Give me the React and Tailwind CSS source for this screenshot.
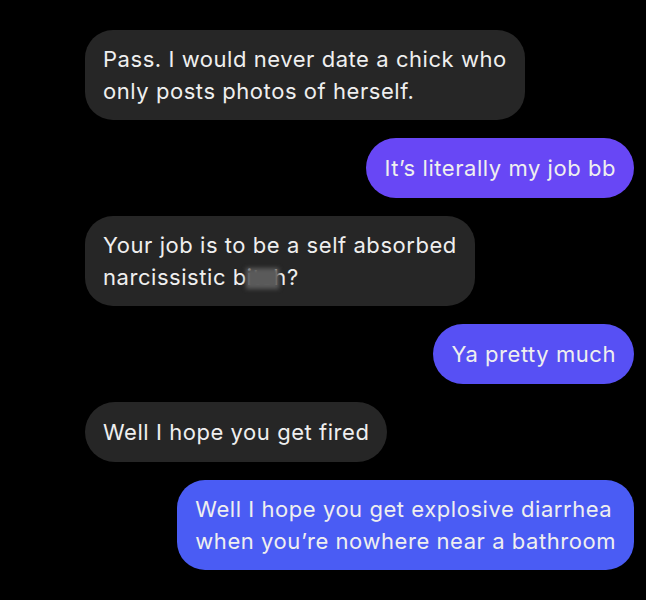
import React from 'react';

const messages = [
  { from: 'them', lines: ['Pass. I would never date a chick who', 'only posts photos of herself.'] },
  { from: 'me', lines: ["It\u2019s literally my job bb"], color: 'bg-[#6847f5]' },
  { from: 'them', lines: ['Your job is to be a self absorbed', 'censored'] },
  { from: 'me', lines: ['Ya pretty much'], color: 'bg-[#5750f4]' },
  { from: 'them', lines: ['Well I hope you get fired'] },
  { from: 'me', lines: ['Well I hope you get explosive diarrhea', 'when you\u2019re nowhere near a bathroom'], color: 'bg-[#4a5cf4]' },
];

function Line({ text }) {
  if (text !== 'censored') return <div>{text}</div>
  return (
    <div>
      narcissistic b
      <span className="relative inline-block">
        itch
        <span className="absolute -left-[1px] top-[7px] w-[33px] h-[21px] bg-[#5a5a5a] blur-[2px]" />
      </span>
      ?
    </div>
  )
}

export default function App() {
  return (
    <div className="w-[646px] h-[600px] bg-black overflow-hidden pt-[30px] pl-[85px] pr-[12px] flex flex-col gap-[18px] text-[#efefef] text-[22px] tracking-[0.55px] leading-[32px] whitespace-nowrap" style={{ fontFamily: 'Inter, "Liberation Sans", sans-serif' }}>
      {messages.map((m, i) => (
        <div key={i} className={m.from === 'me' ? 'flex justify-end' : 'flex justify-start'}>
          <div className={`${m.from === 'me' ? m.color : 'bg-[#262626]'} ${m.lines.length > 1 ? 'rounded-[28px] py-[13px]' : 'rounded-full py-[14px]'} px-[18px]`}>
            {m.lines.map((l, j) => <Line key={j} text={l} />)}
          </div>
        </div>
      ))}
    </div>
  )
}
